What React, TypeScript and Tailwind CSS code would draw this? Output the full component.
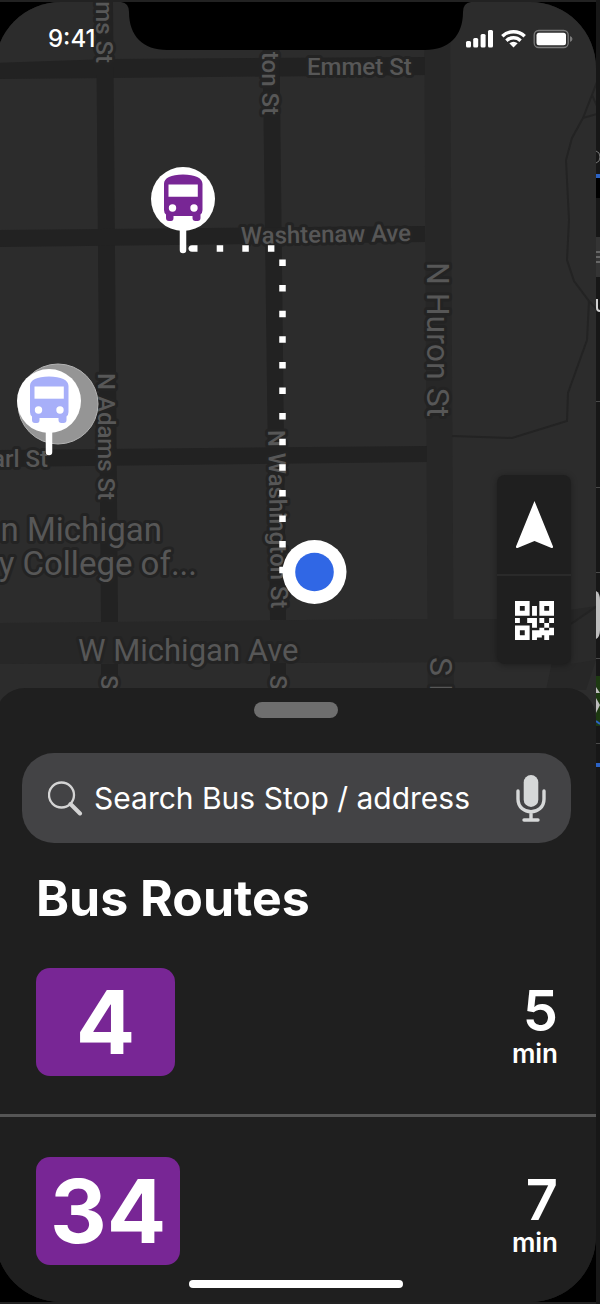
import React from "react";

const routes = [
  { number: "4", minutes: 5 },
  { number: "34", minutes: 7 },
];

function BusMarker({ x, y, color }: { x: number; y: number; color: string }) {
  return (
    <g transform={`translate(${x} ${y})`}>
      <path d="M0 30V51" stroke="#fff" strokeWidth="6.5" strokeLinecap="round" />
      <circle r="32" fill="#fff" />
      <path
        d="M-19 -15C-19 -21 -12 -24.500 0 -24.500S19.500 -21 19.500 -15V11Q19.500 14 17.500 15.500V19Q17.500 22 14.500 22H12.500Q9.500 22 9.500 19V17H-9.500V19Q-9.500 22 -12 22H-14Q-17 22 -17 19V15.500Q-19 14 -19 11Z"
        fill={color}
      />
      <path d="M-14.500 -14.500H14.800V-2.300H-14.500Z" fill="#fff" />
      <circle cx="-10.500" cy="9" r="3.700" fill="#fff" />
      <circle cx="11" cy="9" r="3.700" fill="#fff" />
    </g>
  );
}

function CityMap() {
  return (
    <svg viewBox="-5 2 601 716" className="block h-auto w-full" role="img" aria-label="Map">
      <rect x="-5" y="2" width="601" height="716" fill="#2c2c2c" />
      <g fill="#272727">
        <path d="M424 2H450L454 718H428Z" />
        <path d="M-5 623L210 621L400 619H510L596 606V660L586 690H546L552 662H485L300 663L-5 664Z" />
      </g>
      <path d="M571 624L596 606V660L571 664Z" fill="#2a2a2a" />
      <g fill="#222222">
        <path d="M-5 63L110 59L425 57V75L110 78L-5 79Z" />
        <path d="M96 2H113L118 622H101Z" />
        <path d="M262 2H279L286 620H270Z" />
        <path d="M-5 230L425 226V242L-5 247Z" />
        <path d="M-5 450L427 446V462L-5 467Z" />
        <path d="M101 664H118V700H101ZM270 663H286V700H270Z" />
      </g>
      <g fill="none" stroke="#232323" strokeWidth="2">
        <path d="M597 82L583 118L572 138L566 160L569 220L567 260L574 281L589 301L598 311" />
        <path d="M589 301L587 340L568 393L567 421L512 438L452 436" />
        <path d="M583 118L597 114M592 95L597 106M571 624L597 606" />
      </g>

      <g
        className="font-['Roboto',sans-serif] font-medium"
        fill="#575757"
        stroke="#232323"
        strokeWidth="6"
        strokeLinejoin="round"
        paintOrder="stroke"
        fontSize="24"
      >
        <text x="307" y="75">Emmet St</text>
        <text transform="translate(241 244) rotate(-1)">Washtenaw Ave</text>
        <text x="48" y="467" textAnchor="end">arl St</text>
        <text transform="translate(96 63) rotate(90)" textAnchor="end">ms St</text>
        <text transform="translate(262 115) rotate(90)" textAnchor="end">ton St</text>
        <text transform="translate(98 373) rotate(90)">N Adams St</text>
        <text transform="translate(268 430) rotate(89)">N Washington St</text>
        <text transform="translate(101 675) rotate(90)">S</text>
        <text transform="translate(270 675) rotate(90)">S</text>
      </g>
      <g
        className="font-['Roboto',sans-serif]"
        fill="#575757"
        stroke="#232323"
        strokeWidth="6"
        strokeLinejoin="round"
        paintOrder="stroke"
        fontSize="32"
      >
        <text transform="translate(427 262) rotate(90)">N Huron St</text>
        <text transform="translate(430 657) rotate(90)">S I</text>
        <text x="162" y="541" textAnchor="end" fontSize="33">n Michigan</text>
        <text x="197" y="575" textAnchor="end" fontSize="33">y College of...</text>
        <text x="78" y="661" fontSize="31">W Michigan Ave</text>
      </g>

      <g fill="none" stroke="#fff" strokeWidth="6.500">
        <path d="M216.700 248.500H276" strokeDasharray="6.500 19.100" />
        <path d="M282.500 259.500V574" strokeDasharray="6.500 19.100" />
      </g>
      <path d="M197.500 245.300H192Q188.500 245.500 188.500 248.500T192 251.800H197.500Z" fill="#fff" />

      <circle cx="58" cy="404" r="40" fill="#959595" stroke="#b4b4b4" />
      <BusMarker x={183} y={199} color="#782695" />
      <BusMarker x={49} y={401} color="#a7aff9" />
      <circle cx="314.500" cy="572" r="32" fill="#fff" />
      <circle cx="314.500" cy="572" r="19.300" fill="#3067e5" />
    </svg>
  );
}

function StatusIcons() {
  return (
    <svg width="108" height="20" viewBox="465 29 108 20" fill="#fff" aria-hidden="true">
      <rect x="466" y="41" width="5" height="6.500" rx="1.500" />
      <rect x="473.200" y="38" width="5" height="9.500" rx="1.500" />
      <rect x="480.600" y="34" width="5" height="13.500" rx="1.500" />
      <rect x="488" y="30" width="5" height="17.500" rx="1.500" />
      <g fill="none" stroke="#fff" strokeWidth="3.400">
        <path d="M502.300 36.300A16 16 0 0 1 524.700 36.300" />
        <path d="M506.400 40.700A10.200 10.200 0 0 1 520.600 40.700" />
      </g>
      <path d="M513.500 47.500L509.300 43.300Q513.500 40 517.700 43.300Z" />
      <rect x="534.200" y="30.500" width="34" height="17" rx="4.500" fill="none" stroke="#7a7a7a" strokeWidth="1.300" />
      <rect x="536.500" y="32.800" width="29.500" height="12.400" rx="2.500" />
      <path d="M570 36Q572.500 37 572.500 39T570 42Z" fill="#7a7a7a" />
    </svg>
  );
}

function Notch() {
  return (
    <svg width="350" height="48" viewBox="121 2 350 48" aria-hidden="true">
      <path d="M121 2Q129 3 129 12C129 36 143 50 167 50H425C449 50 463 36 463 12Q463 3 471 2Z" fill="#000" />
    </svg>
  );
}

function QrIcon() {
  return (
    <svg width="39" height="39" viewBox="0 0 16 16" fill="#fff" aria-hidden="true">
      <path
        fillRule="evenodd"
        d="M0 0H6V6H0ZM2 2V4H4V2ZM10 0H16V6H10ZM12 2V4H14V2ZM0 10H6V16H0ZM2 12V14H4V12Z"
      />
      <path d="M7 2H9V6H7ZM0 7H2V9H0ZM5 7H9V11H7V9H5ZM10 7H12V9H10ZM14 7H16V9H14ZM12 9H14V11H12ZM10 11H12V12H14V11H16V14H14V16H12V14H11V15H9V16H7V12H10Z" />
    </svg>
  );
}

function WindowEdge() {
  return (
    <svg className="h-full w-1 shrink-0" viewBox="0 0 4 1304" preserveAspectRatio="none" aria-hidden="true">
      <rect width="4" height="1304" fill="#171717" />
      <rect y="178" width="4" height="20" fill="#000" />
      <rect y="174" width="4" height="4" fill="#2b62c4" />
      <path d="M0 151Q4 152 4 157T0 163" fill="none" stroke="#777" />
      <rect y="237" width="4" height="40" fill="#343434" />
      <path d="M0 252H4M0 257H4M0 262H4" stroke="#999" />
      <path d="M1 299V308Q1 311 4 311" fill="none" stroke="#d0d0d0" strokeWidth="2" />
      <path d="M0 401.500H4M0 487.500H4M0 572.500H4M0 658.500H4M0 743.500H4" stroke="#4a4a4a" />
      <path d="M0 591Q4 593 4 600V630Q4 637 0 639Z" fill="#bdbdbd" />
      <rect y="676" width="4" height="50" fill="#1e3a12" />
      <path d="M0 687L4 693H0ZM0 698L4 705L0 713Z" fill="#bdbdbd" />
      <path d="M0 721L4 724" stroke="#2b62c4" strokeWidth="2" />
      <rect y="763" width="4" height="4" fill="#2b62c4" />
    </svg>
  );
}

export default function App() {
  return (
    <div className="flex bg-[#171717] font-['Inter',sans-serif] text-white">
      <div className="min-w-0 flex-1 overflow-hidden border-y-2 border-[#222222] bg-black">
        <main className="relative -ml-[5px] overflow-hidden rounded-[66px] bg-[#1f1f1f]">
          <section className="relative">
            <CityMap />
            <header className="absolute inset-x-0 top-0 flex items-center justify-between pt-[25px] pr-[23px] pl-[53px]">
              <span className="text-[24px] leading-6 font-medium">9:41</span>
              <StatusIcons />
            </header>
            <div className="absolute inset-x-0 top-0 flex justify-center">
              <Notch />
            </div>
            <div className="absolute right-[25px] bottom-[54px] flex w-[74px] flex-col divide-y-2 divide-[#2a2a2a] rounded-lg bg-[#1f1f1f] shadow-[0_1px_6px_rgba(0,0,0,0.35)]">
              <button type="button" aria-label="Center on my location" className="flex h-[101px] items-center justify-center">
                <svg width="39" height="49" viewBox="0 0 39 49" aria-hidden="true">
                  <path
                    d="M19.500 1L38 46.500Q38.300 48.500 36.500 48L19.500 41L2.500 48Q.7 48.500 1 46.500Z"
                    fill="#fff"
                  />
                </svg>
              </button>
              <button type="button" aria-label="Scan QR code" className="flex h-[88px] items-center justify-center">
                <QrIcon />
              </button>
            </div>
          </section>

          <section className="relative -mt-[30px] rounded-t-[30px] bg-[#1f1f1f] pt-[14px]">
            <div className="mx-auto h-4 w-[84px] rounded-full bg-[#6e6e6e]" />
            <label className="mt-[35px] mr-[25px] ml-[27px] flex h-[90px] items-center rounded-[32px] bg-[#434345] pr-6 pl-[26px]">
              <svg width="35" height="36" viewBox="0 0 35 36" fill="none" stroke="#d4d4d4" aria-hidden="true">
                <circle cx="13.500" cy="15" r="12.500" strokeWidth="2.300" />
                <path d="M22.500 24L32 33.500" strokeWidth="4" strokeLinecap="round" />
              </svg>
              <input
                type="search"
                aria-label="Search Bus Stop / address"
                placeholder="Search Bus Stop / address"
                className="ml-[11px] min-w-0 flex-1 bg-transparent text-[30px] leading-10 outline-none placeholder:text-white"
              />
              <button type="button" aria-label="Voice search">
                <svg width="32" height="48" viewBox="0 0 32 48" fill="#d6d8d8" aria-hidden="true">
                  <rect x="8.700" y="1" width="14.600" height="32" rx="7.300" />
                  <path
                    d="M3 17V25C3 42 29 42 29 25V17M16 38V46M9 46H23"
                    fill="none"
                    stroke="#d6d8d8"
                    strokeWidth="3.400"
                    strokeLinecap="round"
                  />
                </svg>
              </button>
            </label>

            <h1 className="mt-[25px] pl-[41px] text-[50px] leading-[60px] font-bold">Bus Routes</h1>

            <ul className="divide-y-[3px] divide-[#555555]">
              {routes.map((route) => (
                <li key={route.number} className="flex items-center justify-between pt-10 pr-[38px] pb-[38px] pl-[41px] last:pb-[15px]">
                  <span className="flex h-[108px] min-w-[139px] items-center justify-center rounded-[14px] bg-[#782695] px-[14px] text-[88px] leading-none font-bold">
                    {route.number}
                  </span>
                  <span className="flex flex-col items-end pt-2 font-semibold">
                    <span className="text-[56px] leading-[56px]">{route.minutes}</span>
                    <span className="text-[26px] leading-[30px]">min</span>
                  </span>
                </li>
              ))}
            </ul>
            <div className="mx-auto h-2 w-[214px] rounded-full bg-white" />
            <div className="h-[14px]" />
          </section>
        </main>
      </div>
      <div className="flex w-1 shrink-0">
        <WindowEdge />
      </div>
    </div>
  );
}
